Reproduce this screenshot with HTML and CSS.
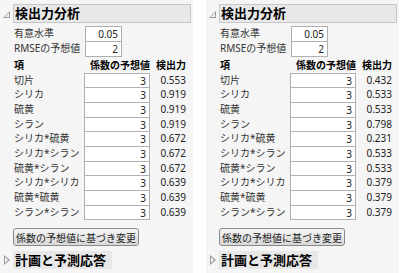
FILE: index.html
```html
<!DOCTYPE html>
<html lang="ja">

<head>
    <meta charset="UTF-8">
    <title>検出力分析</title>
    <link rel="stylesheet" href="styles.css">
</head>

<body>
    <div class="page">
        <!-- 左のレポート -->
        <div class="panel">
            <div class="outline">
                <span class="toggle open"></span>
                <div class="title">検出力分析</div>
            </div>
            <div class="content">
                <div class="params">
                    <span>有意水準</span><span class="box">0.05</span>
                    <span>RMSEの予想値</span><span class="box">2</span>
                </div>
                <div class="grid">
                    <span class="hd">項</span><span class="hd right">係数の予想値</span><span class="hd right">検出力</span>
                    <span>切片</span><span class="box">3</span><span class="num">0.553</span>
                    <span>シリカ</span><span class="box">3</span><span class="num">0.919</span>
                    <span>硫黄</span><span class="box">3</span><span class="num">0.919</span>
                    <span>シラン</span><span class="box">3</span><span class="num">0.919</span>
                    <span>シリカ*硫黄</span><span class="box">3</span><span class="num">0.672</span>
                    <span>シリカ*シラン</span><span class="box">3</span><span class="num">0.672</span>
                    <span>硫黄*シラン</span><span class="box">3</span><span class="num">0.672</span>
                    <span>シリカ*シリカ</span><span class="box">3</span><span class="num">0.639</span>
                    <span>硫黄*硫黄</span><span class="box">3</span><span class="num">0.639</span>
                    <span>シラン*シラン</span><span class="box">3</span><span class="num">0.639</span>
                </div>
                <button class="btn">係数の予想値に基づき変更</button>
            </div>
            <div class="outline sub">
                <span class="toggle closed"></span>
                <div class="title">計画と予測応答</div>
            </div>
        </div>

        <!-- 右のレポート -->
        <div class="panel">
            <div class="outline">
                <span class="toggle open"></span>
                <div class="title">検出力分析</div>
            </div>
            <div class="content">
                <div class="params">
                    <span>有意水準</span><span class="box">0.05</span>
                    <span>RMSEの予想値</span><span class="box">2</span>
                </div>
                <div class="grid">
                    <span class="hd">項</span><span class="hd right">係数の予想値</span><span class="hd right">検出力</span>
                    <span>切片</span><span class="box">3</span><span class="num">0.432</span>
                    <span>シリカ</span><span class="box">3</span><span class="num">0.533</span>
                    <span>硫黄</span><span class="box">3</span><span class="num">0.533</span>
                    <span>シラン</span><span class="box">3</span><span class="num">0.798</span>
                    <span>シリカ*硫黄</span><span class="box">3</span><span class="num">0.231</span>
                    <span>シリカ*シラン</span><span class="box">3</span><span class="num">0.533</span>
                    <span>硫黄*シラン</span><span class="box">3</span><span class="num">0.533</span>
                    <span>シリカ*シリカ</span><span class="box">3</span><span class="num">0.379</span>
                    <span>硫黄*硫黄</span><span class="box">3</span><span class="num">0.379</span>
                    <span>シラン*シラン</span><span class="box">3</span><span class="num">0.379</span>
                </div>
                <button class="btn">係数の予想値に基づき変更</button>
            </div>
            <div class="outline sub">
                <span class="toggle closed"></span>
                <div class="title">計画と予測応答</div>
            </div>
        </div>
    </div>
</body>

</html>
```

FILE: styles.css
```css
body {
    margin: 0;
    background-color: white;
    font-family: "Noto Sans", "Noto Sans CJK JP", sans-serif;
    font-size: 10px;
    color: #333;
}

.page {
    display: flex;
    gap: 13px;
}

.panel {
    width: 193px;
    height: 273px;
    overflow: hidden;
    background-color: #f5f5f5;
    flex-shrink: 0;
}

.outline {
    display: flex;
    align-items: center;
    padding: 4px 2px 0 3px;
}

.toggle {
    width: 10px;
    height: 10px;
    position: relative;
}

/* 開いた三角 */
.toggle.open::before {
    content: "";
    position: absolute;
    left: 0;
    top: 2px;
    border-style: solid;
    border-width: 0 0 7px 7px;
    border-color: transparent transparent #999 transparent;
}

.toggle.open::after {
    content: "";
    position: absolute;
    left: 2px;
    top: 4px;
    border-style: solid;
    border-width: 0 0 4px 4px;
    border-color: transparent transparent #f5f5f5 transparent;
}

/* 閉じた三角 */
.toggle.closed::before {
    content: "";
    position: absolute;
    left: 1px;
    top: 0;
    border-style: solid;
    border-width: 5px 0 5px 6px;
    border-color: transparent transparent transparent #999;
}

.toggle.closed::after {
    content: "";
    position: absolute;
    left: 2px;
    top: 2px;
    border-style: solid;
    border-width: 3px 0 3px 3px;
    border-color: transparent transparent transparent #f5f5f5;
}

.title {
    flex: 1;
    height: 17px;
    line-height: 17px;
    padding-left: 1px;
    background-color: #e8e8e8;
    border: 1px solid #c8c8c8;
    font-size: 13px;
    font-weight: bold;
    color: #000;
}

.content {
    padding: 3px 0 0 14px;
}

.params {
    display: grid;
    grid-template-columns: 71px 37px;
}

.params span {
    height: 15px;
    line-height: 15px;
}

.box {
    background-color: white;
    border: 1px solid #b0b0b0;
    text-align: right;
    padding-right: 3px;
    box-sizing: border-box;
    margin-bottom: -1px;
    color: #222;
}

.params .box {
    height: 16px;
}

.grid {
    display: grid;
    grid-template-columns: 70px 66px 36px;
    margin-top: 2px;
}

.grid span {
    height: 14.67px;
    line-height: 14.67px;
    white-space: nowrap;
}

.grid .box {
    height: 15.67px;
}

.hd {
    font-weight: bold;
    color: #000;
}

.right,
.num {
    text-align: right;
}

.num {
    color: #222;
}

.btn {
    display: block;
    margin-top: 9px;
    margin-left: -1px;
    height: 18px;
    padding: 0 2px;
    font-family: inherit;
    font-size: 10px;
    color: #222;
    border: 1px solid #8a8a8a;
    border-radius: 3px;
    background: linear-gradient(#f6f6f6, #d8d8d8);
}

.outline.sub {
    padding-top: 5px;
}

.sub .title {
    flex: none;
    width: 96px;
    height: 16px;
    line-height: 16px;
    border-color: #e8e8e8;
}
```
